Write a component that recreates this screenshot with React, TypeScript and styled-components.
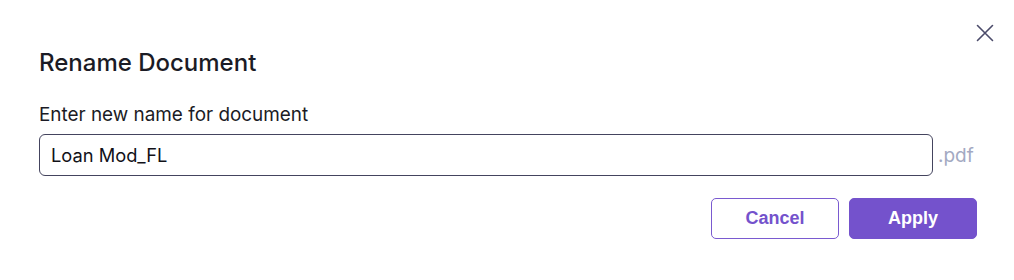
import React from "react";
import styled, { createGlobalStyle } from "styled-components";

const GlobalStyle = createGlobalStyle`
  html, body { margin: 0; padding: 0; background: #ffffff; }
  body { font-family: Inter, "Noto Sans", sans-serif; }
  * { box-sizing: border-box; }
`;

const Dialog = styled.div`
  position: relative;
  width: 1014px;
  height: 280px;
  background: #ffffff;
  padding: 49px 37px 0 39px;
  display: flex;
  flex-direction: column;
`;

const CloseButton = styled.button`
  position: absolute;
  top: 24px;
  right: 20px;
  width: 18px;
  height: 18px;
  padding: 0;
  border: none;
  background: transparent;
  display: flex;
  align-items: center;
  justify-content: center;
  cursor: pointer;
`;

const Title = styled.h2`
  margin: 0;
  font-family: Inter, sans-serif;
  font-size: 24px;
  line-height: 28px;
  font-weight: 500;
  color: #1b1b25;
`;

const Label = styled.label`
  margin-top: 26px;
  font-family: Inter, sans-serif;
  font-size: 18.9px;
  line-height: 24px;
  font-weight: 400;
  color: #1b1b25;
`;

const InputRow = styled.div`
  margin-top: 7px;
  display: flex;
  align-items: center;
`;

const NameInput = styled.input`
  flex: 1;
  height: 42px;
  border: 1px solid #44445e;
  border-radius: 6px;
  padding: 0 11px;
  font-family: Inter, sans-serif;
  font-size: 18.3px;
  color: #111118;
  outline: none;
  background: #ffffff;
`;

const Extension = styled.span`
  margin-left: 5px;
  width: 39px;
  font-family: Inter, sans-serif;
  font-size: 19px;
  color: #a3a9c2;
`;

const ButtonRow = styled.div`
  margin-top: 22px;
  display: flex;
  justify-content: flex-end;
  gap: 10px;
`;

const Button = styled.button<{ $primary?: boolean }>`
  width: 128px;
  height: 41px;
  border-radius: 5px;
  border: 1px solid ${(p) => (p.$primary ? "#7452cc" : "#7a5ad0")};
  background: ${(p) => (p.$primary ? "#7452cc" : "#ffffff")};
  color: ${(p) => (p.$primary ? "#ffffff" : "#7452cc")};
  font-family: "Liberation Sans", Arial, sans-serif;
  font-weight: 700;
  font-size: 18px;
  cursor: pointer;
`;

export default function App() {
  return (
    <>
      <GlobalStyle />
      <Dialog>
        <CloseButton aria-label="Close">
          <svg width="18" height="18" viewBox="0 0 18 18">
            <path
              d="M1.5 1.5 L16.5 16.5 M16.5 1.5 L1.5 16.5"
              stroke="#4b4b6a"
              strokeWidth="1.6"
              strokeLinecap="round"
            />
          </svg>
        </CloseButton>
        <Title>Rename Document</Title>
        <Label htmlFor="docname">Enter new name for document</Label>
        <InputRow>
          <NameInput id="docname" defaultValue="Loan Mod_FL" />
          <Extension>.pdf</Extension>
        </InputRow>
        <ButtonRow>
          <Button>Cancel</Button>
          <Button $primary>Apply</Button>
        </ButtonRow>
      </Dialog>
    </>
  );
}
